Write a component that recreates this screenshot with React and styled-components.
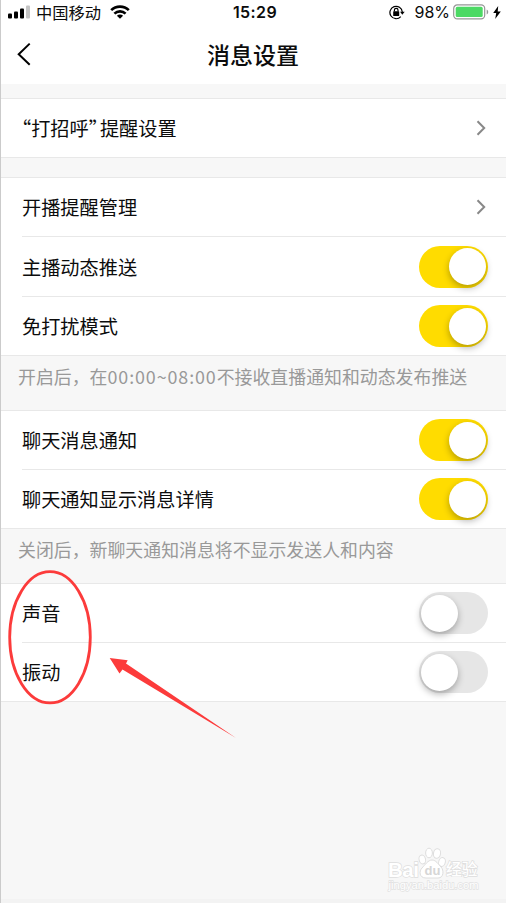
import React from 'react';
import styled, { createGlobalStyle } from 'styled-components';

const GlobalStyle = createGlobalStyle`
  * {
    box-sizing: border-box;
  }

  body {
    margin: 0;
    background: #f7f7f7;
    font-family: 'Noto Sans CJK SC', 'Noto Sans', sans-serif;
    color: #0c0c0c;
  }
`;

const Screen = styled.div`
  position: relative;
  width: 506px;
  height: 903px;
  overflow: hidden;
  display: flex;
  flex-direction: column;
  background: #f7f7f7;
  border-left: 1px solid #cbcbcb;
`;

const StatusBar = styled.div`
  display: grid;
  grid-template-columns: 1fr auto 1fr;
  align-items: center;
  height: 24px;
  flex: none;
  padding: 0 5px 0 7px;
  background: #fff;
`;

const StatusGroup = styled.div`
  display: flex;
  align-items: center;
  justify-content: ${props => (props.$end ? 'flex-end' : 'flex-start')};
`;

const Carrier = styled.span`
  margin: 0 9px 0 6px;
  font-size: 16.3px;
  line-height: 24px;
`;

const Clock = styled.span`
  padding-left: 1px;
  font-family: Inter, sans-serif;
  font-size: 16px;
  font-weight: 600;
  line-height: 24px;
  letter-spacing: 0.4px;
`;

const Percent = styled.span`
  margin: 0 3px 0 9px;
  font-family: Inter, sans-serif;
  font-size: 16px;
  line-height: 24px;
`;

const Icon = styled.svg`
  display: block;
  flex: none;
`;

const NavBar = styled.header`
  display: grid;
  grid-template-columns: 60px 1fr 60px;
  align-items: center;
  height: 60px;
  flex: none;
  background: #fff;
`;

const BackButton = styled.button`
  padding: 0 0 0 16px;
  border: 0;
  background: none;
`;

const Title = styled.h1`
  margin: 0 0 0 -1px;
  font-size: 23px;
  font-weight: 500;
  line-height: 60px;
  text-align: center;
`;

const Gap = styled.div`
  flex: none;
  height: ${props => props.$height}px;
`;

const Group = styled.section`
  flex: none;
  border-top: 1px solid #e8e8e8;
  border-bottom: 1px solid #e8e8e8;
  background: #fff;
`;

const Row = styled.div`
  display: flex;
  align-items: center;
  justify-content: space-between;
  box-sizing: content-box;
  height: ${props => props.$height || 58}px;
  margin-left: 21px;
  padding-right: 18px;

  & + & {
    border-top: 1px solid #e8e8e8;
  }
`;

const Label = styled.span`
  font-size: 19.2px;
  line-height: 58px;
  white-space: nowrap;
`;

// the full-width quotes are pulled in to about half an em
const Quote = styled.span`
  margin: ${props => (props.$close ? '0 -8px 0 0' : '0 0 0 -10px')};
`;

const Hint = styled.p`
  flex: none;
  height: 54px;
  margin: 0;
  padding: 7px 0 0 17px;
  color: #999;
  font-size: 17.9px;
  line-height: 27px;
  white-space: nowrap;
`;

const Time = styled.span`
  letter-spacing: 0.9px;
`;

const Switch = styled.button`
  display: flex;
  justify-content: ${props => (props.$on ? 'flex-end' : 'flex-start')};
  width: 69px;
  height: 42px;
  padding: 2.5px 2.5px 0 1.5px;
  border: 0;
  border-radius: 21px;
  background: ${props => (props.$on ? '#ffdc00' : '#e6e6e6')};
`;

const Knob = styled.span`
  width: 37px;
  height: 37px;
  border-radius: 50%;
  background: #fff;
  box-shadow: 0 3px 7px rgba(0, 0, 0, 0.3);
`;

const Annotation = styled.svg`
  position: absolute;
  top: 565px;
  left: -1px;
  pointer-events: none;
`;

const Watermark = styled.svg`
  position: absolute;
  top: 842px;
  left: 379px;
`;

const Footer = styled.div`
  height: 4px;
  margin-top: auto;
  background: #f3f3f3;
`;

const SignalIcon = () => (
  <Icon width="22" height="14" viewBox="0 0 22 14">
    <rect x="0" y="8.5" width="4" height="5" rx="1" />
    <rect x="6" y="6.5" width="4" height="7" rx="1" />
    <rect x="12" y="3.5" width="4" height="10" rx="1" />
    <rect x="18" y="0.5" width="4" height="13" rx="1" fill="#c4c4c4" />
  </Icon>
);

const WifiIcon = () => (
  <Icon width="20" height="14" viewBox="0 0 20 14">
    <g fill="none" stroke="#000" strokeWidth="2.6">
      <path d="M1.2 5.2C6 .4 14 .4 18.8 5.2" />
      <path d="M4.4 8.6C7.5 5.6 12.5 5.6 15.6 8.6" />
    </g>
    <path d="M6.9 10.8C8.7 9.2 11.3 9.2 13.1 10.8L10 13.8z" />
  </Icon>
);

const LockIcon = () => (
  <Icon width="16" height="15" viewBox="0 0 16 15">
    <path d="M11.8 11.6A6.2 6.2 0 1 1 13.3 7" fill="none" stroke="#000" strokeWidth="1.2" />
    <path d="M11.1 6.8h4.6l-2.4 3z" />
    <rect x="4.2" y="6.2" width="6" height="4.9" rx="0.6" />
    <path d="M5.4 6.4V5.1a1.8 1.8 0 0 1 3.6 0v1.3" fill="none" stroke="#000" strokeWidth="1.2" />
  </Icon>
);

const BatteryIcon = () => (
  <Icon width="37" height="16" viewBox="0 0 37 16">
    <rect x="0.7" y="0.9" width="31" height="14" rx="3.6" fill="#fff" stroke="#969696" strokeWidth="1.2" />
    <rect x="2.7" y="2.8" width="27" height="10.3" rx="1.6" fill="#4cd964" />
    <path d="M33.7 5.5c2 .8 2 4.2 0 5z" fill="#969696" />
  </Icon>
);

const BoltIcon = () => (
  <Icon width="11" height="13" viewBox="-3 0 11 13">
    <path d="M5.2 0L.2 7h3L2.2 13 7.8 5.4H4.7z" />
  </Icon>
);

const BackIcon = () => (
  <Icon width="14" height="24" viewBox="0 0 14 24">
    <path d="M12.7 1.6L1.7 12.2 12.7 22.8" fill="none" stroke="#000" strokeWidth="2" />
  </Icon>
);

const Arrow = () => (
  <Icon width="14" height="16" viewBox="0 0 14 16">
    <path d="M3.5 1.3L10.2 8l-6.7 6.7" fill="none" stroke="#888" strokeWidth="2" />
  </Icon>
);

const Toggle = ({ on, label }) => (
  <Switch $on={on} role="switch" aria-checked={on} aria-label={label}>
    <Knob />
  </Switch>
);

const SwitchRow = ({ label, on = false, height }) => (
  <Row $height={height}>
    <Label>{label}</Label>
    <Toggle on={on} label={label} />
  </Row>
);

const LinkRow = ({ children }) => (
  <Row>
    <Label>{children}</Label>
    <Arrow />
  </Row>
);

const PawMark = () => (
  <Watermark width="110" height="55" viewBox="380 842 110 55">
    <g fill="#fff" stroke="#dedede" strokeWidth="1">
      <ellipse cx="422.3" cy="859.5" rx="3.2" ry="4.5" transform="rotate(-15 422.3 859.5)" />
      <ellipse cx="429" cy="853" rx="3.4" ry="4.8" />
      <ellipse cx="437" cy="853.5" rx="3.5" ry="4.8" transform="rotate(10 437 853.5)" />
      <ellipse cx="442" cy="862" rx="3.3" ry="4.5" transform="rotate(15 442 862)" />
      <path d="M432 860c4 0 6 4 9 7s3 11-3 11h-12c-7 0-7-7-4-10s6-8 10-8z" />
    </g>
    <g fill="#fff" stroke="#dedede" strokeWidth="1.4" paintOrder="stroke" fontWeight="700">
      <text x="388" y="876.5" fontFamily="Liberation Sans" fontSize="20.5" textLength="31">Bai</text>
      <text x="446" y="875" fontFamily="Noto Sans CJK SC" fontSize="15.8" fontWeight="500">经验</text>
      <text x="388.5" y="888.5" strokeWidth="1.4" stroke="#e2e2e2" fontFamily="Liberation Sans" fontSize="11.5" fontWeight="400" textLength="90" lengthAdjust="spacingAndGlyphs">jingyan.baidu.com</text>
    </g>
    <text x="424.5" y="875" fill="#d6d6d6" fontFamily="Liberation Sans" fontSize="13" fontWeight="700">du</text>
  </Watermark>
);

const App = () => (
  <>
    <GlobalStyle />
    <Screen>
      <StatusBar>
        <StatusGroup>
          <SignalIcon />
          <Carrier>中国移动</Carrier>
          <WifiIcon />
        </StatusGroup>
        <Clock>15:29</Clock>
        <StatusGroup $end>
          <LockIcon />
          <Percent>98%</Percent>
          <BatteryIcon />
          <BoltIcon />
        </StatusGroup>
      </StatusBar>
      <NavBar>
        <BackButton aria-label="返回">
          <BackIcon />
        </BackButton>
        <Title>消息设置</Title>
      </NavBar>
      <Gap $height={14} />
      <Group>
        <LinkRow>
          <Quote>“</Quote>打招呼<Quote $close>”</Quote>提醒设置
        </LinkRow>
      </Group>
      <Gap $height={19} />
      <Group>
        <LinkRow>开播提醒管理</LinkRow>
        <SwitchRow label="主播动态推送" height={59} on />
        <SwitchRow label="免打扰模式" on />
      </Group>
      <Hint>
        开启后，在<Time>00:00~08:00</Time>不接收直播通知和动态发布推送
      </Hint>
      <Group>
        <SwitchRow label="聊天消息通知" on />
        <SwitchRow label="聊天通知显示消息详情" on />
      </Group>
      <Hint>关闭后，新聊天通知消息将不显示发送人和内容</Hint>
      <Group>
        <SwitchRow label="声音" />
        <SwitchRow label="振动" />
      </Group>
      <PawMark />
      <Footer />
      <Annotation width="250" height="180" viewBox="0 565 250 180">
        <ellipse cx="50" cy="637.3" rx="40.3" ry="65.6" fill="none" stroke="#fc3b3b" strokeWidth="2.8" />
        <path d="M109.7 658L127.7 660.3 126 663.5 236 738 122.5 669.5 119.5 673.5z" fill="#fc3b3b" />
      </Annotation>
    </Screen>
  </>
);

export default App;
